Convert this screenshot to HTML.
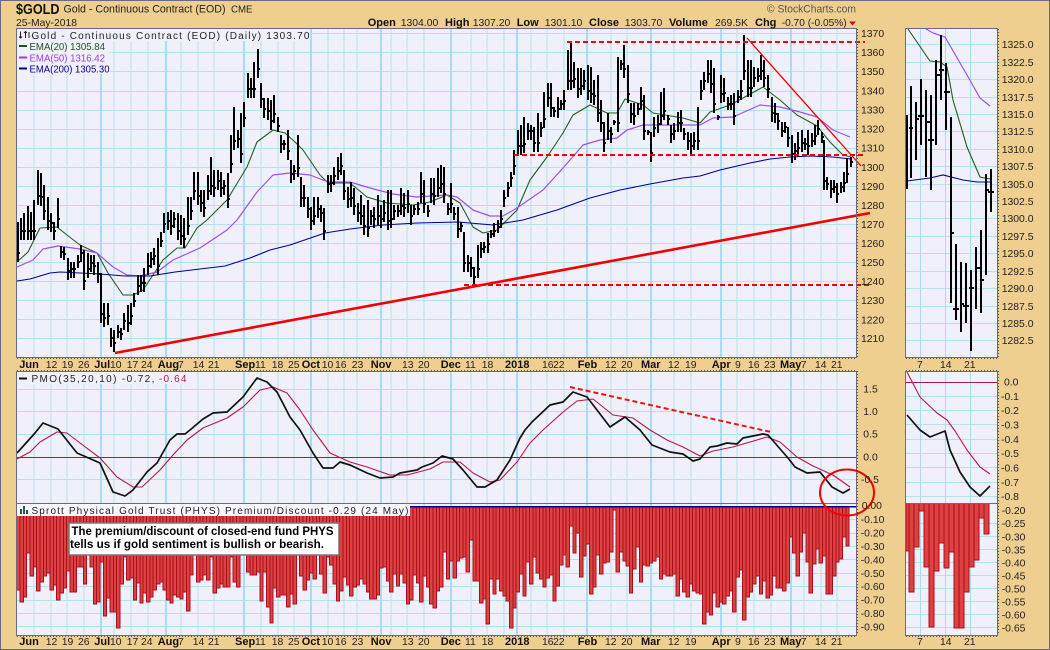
<!DOCTYPE html>
<html><head><meta charset="utf-8"><title>$GOLD</title>
<style>
html,body{margin:0;padding:0;background:#eecf90}
svg{display:block}
text{font-family:"Liberation Sans",Arial,sans-serif;fill:#222;font-size:10.4px}
.b{font-weight:bold;font-size:11px;fill:#111}
.l{letter-spacing:.6px;font-size:10px;fill:#222}
</style></head><body>
<svg xmlns="http://www.w3.org/2000/svg" width="1050" height="650" viewBox="0 0 1050 650">
<rect x="0" y="0" width="1050" height="650" fill="#eecf90"/>
<rect x=".5" y=".5" width="1049" height="649" fill="none" stroke="#6a6a86"/>
<!-- panels -->
<g fill="#f0f0fa">
<rect x="17" y="29" width="839" height="328"/><rect x="17" y="371" width="839" height="264"/>
<rect x="906" y="29" width="91" height="328"/><rect x="906" y="371" width="91" height="264"/>
</g>
<!-- grid -->
<g shape-rendering="crispEdges" fill="none">
<path stroke="#b4e2ea" d="M34 29V357M51 29V357M67 29V357M84 29V357M114 29V357M131 29V357M148 29V357M181 29V357M198 29V357M214 29V357M261 29V357M278 29V357M294 29V357M328 29V357M344 29V357M357 29V357M391 29V357M407 29V357M424 29V357M471 29V357M487 29V357M504 29V357M531 29V357M547 29V357M564 29V357M611 29V357M627 29V357M674 29V357M691 29V357M737 29V357M754 29V357M771 29V357M804 29V357M821 29V357M837 29V357M34 371V635M51 371V635M67 371V635M84 371V635M114 371V635M131 371V635M148 371V635M181 371V635M198 371V635M214 371V635M261 371V635M278 371V635M294 371V635M328 371V635M344 371V635M357 371V635M391 371V635M407 371V635M424 371V635M471 371V635M487 371V635M504 371V635M531 371V635M547 371V635M564 371V635M611 371V635M627 371V635M674 371V635M691 371V635M737 371V635M754 371V635M771 371V635M804 371V635M821 371V635M837 371V635M17 33.5H856M17 52.5H856M17 71.5H856M17 91.5H856M17 110.5H856M17 129.5H856M17 148.5H856M17 167.5H856M17 186.5H856M17 205.5H856M17 224.5H856M17 243.5H856M17 262.5H856M17 281.5H856M17 300.5H856M17 319.5H856M17 338.5H856M17 389.5H856M17 411.5H856M17 434.5H856M17 479.5H856M17 519.5H856M17 533.5H856M17 546.5H856M17 559.5H856M17 573.5H856M17 586.5H856M17 600.5H856M17 613.5H856M17 626.5H856M906 44.5H997M906 62.5H997M906 79.5H997M906 97.5H997M906 114.5H997M906 131.5H997M906 149.5H997M906 166.5H997M906 184.5H997M906 201.5H997M906 218.5H997M906 236.5H997M906 253.5H997M906 271.5H997M906 288.5H997M906 306.5H997M906 323.5H997M906 340.5H997M906 396.5H997M906 410.5H997M906 424.5H997M906 439.5H997M906 453.5H997M906 467.5H997M906 482.5H997M906 496.5H997M906 523.5H997M906 536.5H997M906 549.5H997M906 562.5H997M906 575.5H997M906 588.5H997M906 601.5H997M906 614.5H997M906 627.5H997"/>
<path stroke="#a8dcf2" stroke-width="2" d="M101 29V357M166 29V357M244 29V357M311 29V357M381 29V357M451 29V357M517 29V357M587 29V357M651 29V357M721 29V357M791 29V357M101 371V635M166 371V635M244 371V635M311 371V635M381 371V635M451 371V635M517 371V635M587 371V635M651 371V635M721 371V635M791 371V635"/>
<path stroke="#a8dcee" d="M920.5 29V357M945.5 29V357M970.5 29V357M920.5 371V635M945.5 371V635M970.5 371V635"/>
</g>
<!-- legends backdrop -->
<rect x="17" y="29" width="293" height="12" fill="#f0f0fa"/><rect x="17" y="41" width="93" height="33" fill="#f0f0fa"/>
<!-- EMA main -->
<g fill="none" stroke-linejoin="round">
<path stroke="#1f5f1f" stroke-width="1.1" d="M17 262L28 252L40 228L57 227L67 235L80 245L97 253L108 273L123 295L133 295L143 290L163 260L177 248L185 248L197 228L207 220L227 200L247 167L257 142L273 130L285 133L295 142L303 150L320 175L328 183L350 183L367 197L387 203L413 205L430 202L447 195L460 203L473 227L483 233L497 230L517 210L530 180L547 157L563 133L573 115L590 105L607 113L617 113L625 99L643 105L653 113L683 118L700 123L710 112L730 105L743 98L763 87L780 100L797 115L817 126L830 142L843 155L851 157"/>
<path stroke="#a04fe6" stroke-width="1.2" d="M17 267L33 260L43 249L58 246L80 249L97 253L113 267L127 275L140 276L157 272L173 260L200 248L227 230L237 220L257 192L273 175L290 173L310 175L328 182L350 182L370 188L393 194L417 197L447 195L457 197L473 210L490 216L503 216L517 208L543 190L563 168L583 145L600 140L617 138L627 130L643 125L667 125L700 125L713 118L733 117L760 105L780 107L800 112L817 117L833 130L850 137"/>
<path stroke="#000090" stroke-width="1.1" d="M17 281L30 279L50 273L60 272L80 273L100 274L125 276L150 276L175 272L200 269L225 266L250 258L270 250L290 245L325 233L350 229L383 225L417 223L458 222L493 225L523 220L557 210L590 198L620 190L650 184L683 178L700 176L720 170L750 163L770 159L790 157L810 156L833 157L851 159"/>
</g>
<!-- OHLC main -->
<path fill="none" stroke="#000" stroke-width="2" shape-rendering="crispEdges" d="M18 222V262m0-9h2M21 218V240m0-9h2M24 213V240m0-9h2M28 206V240m0-9h2M31 212V240m0-9h2M34 200V240m0-9h2M38 170V205m0-9h2M41 173V206m0-9h2M44 185V220m0-9h2M48 197V230m0-9h2M51 213V232m0-9h2M54 222V240m0-9h2M58 198V228m0-9h2M61 246V258m0-6h2M64 247V260m0-6h2M68 258V280m0-9h2M71 262V278m0-9h2M74 262V278m0-9h2M78 255V268m0-6h2M81 245V262m0-9h2M84 250V290m0-9h2M88 253V278m0-9h2M91 255V272m0-9h2M94 255V275m0-9h2M98 262V283m0-9h2M101 273V323m0-9h2M104 303V327m0-9h2M108 303V325m0-9h2M111 328V347m0-9h2M114 330V352m0-9h2M118 325V338m0-6h2M121 328V340m0-6h2M124 313V330m0-9h2M128 305V332m0-9h2M131 303V325m0-9h2M134 293V307m0-6h2M138 275V295m0-9h2M141 275V292m0-9h2M144 268V292m0-9h2M148 253V275m0-9h2M151 252V268m0-9h2M154 248V265m0-9h2M158 238V275m0-9h2M161 232V247m0-6h2M164 213V233m0-9h2M168 212V230m0-9h2M171 210V235m0-9h2M174 212V228m0-9h2M178 213V240m0-9h2M181 215V245m0-9h2M184 218V248m0-9h2M188 197V235m0-9h2M191 197V220m0-9h2M194 172V200m0-9h2M198 172V205m0-9h2M201 190V212m0-9h2M204 190V217m0-9h2M208 175V200m0-9h2M211 157V195m0-9h2M214 170V197m0-9h2M218 170V190m0-9h2M221 172V197m0-9h2M224 180V195m0-9h2M228 173V208m0-9h2M231 135V173m0-9h2M234 107V150m0-9h2M238 130V148m0-9h2M241 113V163m0-9h2M244 102V127m0-9h2M248 73V98m0-9h2M251 78V98m0-9h2M254 62V98m0-9h2M258 49V78m0-9h2M261 83V108m0-9h2M264 98V118m0-9h2M268 98V120m0-9h2M271 100V130m0-9h2M274 95V123m0-9h2M278 117V132m0-6h2M281 135V153m0-9h2M284 140V150m0-6h2M288 130V160m0-9h2M291 160V183m0-9h2M294 165V180m0-9h2M298 135V177m0-9h2M301 177V207m0-9h2M304 185V207m0-9h2M308 197V218m0-9h2M311 207V230m0-9h2M314 197V225m0-9h2M318 197V218m0-9h2M321 205V222m0-9h2M324 208V240m0-9h2M328 175V193m0-9h2M331 175V192m0-9h2M334 167V185m0-9h2M338 157V180m0-9h2M341 153V175m0-9h2M344 170V200m0-9h2M348 187V208m0-9h2M351 182V207m0-9h2M354 188V215m0-9h2M358 203V222m0-9h2M361 195V225m0-9h2M364 205V235m0-9h2M368 200V237m0-9h2M371 210V225m0-9h2M374 207V228m0-9h2M378 195V225m0-9h2M381 205V228m0-9h2M384 200V222m0-9h2M388 190V230m0-9h2M391 190V228m0-9h2M394 205V220m0-9h2M398 205V217m0-6h2M401 188V215m0-9h2M404 193V217m0-9h2M408 190V213m0-9h2M411 205V225m0-9h2M414 205V215m0-6h2M418 202V215m0-6h2M421 172V203m0-9h2M424 180V213m0-9h2M428 205V217m0-6h2M431 178V203m0-9h2M434 178V205m0-9h2M438 168V197m0-9h2M441 165V193m0-9h2M444 167V203m0-9h2M448 203V215m0-6h2M451 183V213m0-9h2M454 207V220m0-6h2M458 207V238m0-9h2M461 222V232m0-6h2M464 232V272m0-9h2M468 255V272m0-9h2M471 257V277m0-9h2M474 267V286m0-9h2M478 245V278m0-9h2M481 242V258m0-9h2M484 242V253m0-6h2M488 233V253m0-9h2M491 230V238m0-4h2M494 223V237m0-6h2M498 220V233m0-6h2M501 210V228m0-9h2M504 190V207m0-9h2M508 182V197m0-9h2M511 172V187m0-9h2M514 150V175m0-9h2M518 130V155m0-9h2M521 125V155m0-9h2M524 117V153m0-9h2M528 123V140m0-9h2M531 125V140m0-9h2M534 127V152m0-9h2M538 113V152m0-9h2M541 122V137m0-9h2M544 92V128m0-9h2M548 83V107m0-9h2M551 83V117m0-9h2M554 107V117m0-6h2M558 97V118m0-9h2M561 100V110m0-6h2M564 90V110m0-9h2M568 50V90m0-9h2M571 43V90m0-9h2M574 62V88m0-9h2M578 68V98m0-9h2M581 68V95m0-9h2M584 70V90m0-9h2M588 65V100m0-9h2M591 67V103m0-9h2M594 80V105m0-9h2M598 75V122m0-9h2M601 100V132m0-9h2M604 122V152m0-9h2M608 113V140m0-9h2M611 127V143m0-9h2M614 120V125m0-3h2M618 57V132m0-9h2M621 60V70m0-6h2M624 45V78m0-9h2M628 65V103m0-9h2M631 103V123m0-9h2M634 103V125m0-9h2M638 103V115m0-6h2M641 87V110m0-9h2M644 95V140m0-9h2M648 130V135m0-3h2M651 132V162m0-9h2M654 117V137m0-9h2M658 115V133m0-9h2M661 92V125m0-9h2M664 88V120m0-9h2M668 115V125m0-6h2M671 125V143m0-9h2M674 123V140m0-9h2M678 112V132m0-9h2M681 110V132m0-9h2M684 128V140m0-6h2M688 132V150m0-9h2M691 133V155m0-9h2M694 132V150m0-9h2M698 107V150m0-9h2M701 80V100m0-9h2M704 72V90m0-9h2M708 60V83m0-9h2M711 60V93m0-9h2M714 68V113m0-9h2M718 115V120m0-3h2M721 75V103m0-9h2M724 78V102m0-9h2M728 97V110m0-6h2M731 95V110m0-6h2M734 93V125m0-9h2M738 90V103m0-6h2M741 80V100m0-9h2M744 35V80m0-9h2M748 60V97m0-9h2M751 60V97m0-9h2M754 67V87m0-9h2M758 68V82m0-6h2M761 55V80m0-9h2M764 60V87m0-9h2M768 75V98m0-9h2M772 97V122m0-9h2M775 103V123m0-9h2M778 113V130m0-9h2M782 122V137m0-6h2M785 122V133m0-6h2M788 127V147m0-9h2M792 135V163m0-9h2M795 143V160m0-9h2M798 132V157m0-9h2M802 130V152m0-9h2M805 138V150m0-6h2M808 130V155m0-9h2M812 133V147m0-6h2M815 125V145m0-9h2M818 120V135m0-6h2M822 132V143m0-6h2M824 140V190m0-9h2M827 177V190m0-6h2M831 180V198m0-9h2M834 180V193m0-6h2M837 183V203m0-9h2M841 182V193m0-6h2M844 172V192m0-9h2M847 158V183m0-9h2M851 157V167m0-5h2"/>
<!-- red annotations main -->
<g fill="none" stroke="#f00000">
<path stroke-width="2" stroke-dasharray="5 3" d="M567 42H865M514 155H866M464 285H870"/>
<path stroke-width="2.6" d="M115 353L870 213"/>
<path stroke-width="1.3" d="M747 38L861 166"/>
</g>
<!-- Right main -->
<g fill="none">
<path stroke="#1f5f1f" stroke-width="1.1" d="M908 29L930 61L940 62L947 67L953 100L967 147L980 177L990 179"/>
<path stroke="#a04fe6" stroke-width="1.2" d="M926 29L933 33L945 37L967 75L980 98L990 106"/>
<path stroke="#000090" stroke-width="1.1" d="M907 181L930 178L943 175L963 180L977 182L990 182"/>
<path stroke="#000" stroke-width="2" shape-rendering="crispEdges" d="M907 115V189M911 86V178m-2-50h4M916 102V160m0-41h3M921 79V145m-3-29h6M926 90V177m0-55h4M931 95V190m-3-50h6M936 60V145m0-70h4M941 35V100m-2-30h5M946 63V130m-2-38h6M951 117V303m0-70h3M956 244V320m-3-11h6M961 262V332m0-28h3M966 263V323m-3-17h6M971 270V351m-2-63h5M976 247V309m0-41h4M981 230V313m0-33h3M986 174V275m0-85h3M991 169V212m-3-20h6"/>
</g>
<!-- PMO -->
<g fill="none" stroke-linejoin="round">
<path stroke="#a81a3c" stroke-width="1.1" shape-rendering="crispEdges" d="M17 457.5H856M906 382.5H997"/>
<path stroke="#b8164a" stroke-width="1.1" d="M17 459L30 452L40 442L57 432L67 433L80 443L100 458L117 477L133 487L142 487L160 470L173 455L187 440L203 428L227 418L243 407L260 390L273 387L287 393L300 410L313 430L330 453L350 462L367 467L390 475L407 475L430 469L443 462L460 462L473 473L490 482L500 480L517 462L530 443L543 430L563 412L577 401L593 399L613 415L633 418L650 430L667 440L683 447L700 456L713 451L733 447L767 437L780 442L797 457L813 466L833 475L850 487"/>
<path stroke="#111" stroke-width="1.7" d="M17 453L35 433L43 423L58 429L77 453L100 463L113 492L125 496L133 490L147 472L157 463L170 440L177 434L185 434L190 430L203 419L213 413L227 412L243 397L257 378L267 382L277 392L290 417L300 430L313 453L323 468L333 468L340 462L350 465L367 473L380 478L393 477L400 473L417 470L422 467L433 463L442 456L453 459L463 470L477 487L485 487L497 480L510 460L520 438L525 430L532 422L550 405L563 402L573 392L587 397L597 410L610 427L625 417L640 430L652 445L670 452L683 454L693 461L700 459L710 447L717 446L727 443L737 444L743 438L763 434L768 435L788 458L795 467L807 473L820 472L832 487L843 493L850 489"/>
<path stroke="#f01010" stroke-width="2" stroke-dasharray="5 3" d="M570 387L771 432"/>
<path stroke="#b8164a" stroke-width="1.1" d="M907 372L920 397L937 413L947 420L955 431L967 450L980 467L990 474"/>
<path stroke="#111" stroke-width="1.7" d="M907 415L920 430L930 437L945 431L950 450L960 472L970 487L980 496L990 486"/>
</g>
<!-- PHYS panel separators -->
<path stroke="#6a6a80" stroke-width="1" d="M17 503.5H856M906 503.5H997" shape-rendering="crispEdges"/>
<path fill="#dd4141" stroke="#a80f1c" stroke-width="1" shape-rendering="crispEdges" d="M16.7 506V590h3.33V506V602h3.33V506V597h3.33V506V553h3.33V506V576h3.33V506V567h3.33V506V591h3.33V506V582h3.33V506V576h3.33V506V573h3.33V506V590h3.33V506V585h3.33V506V600h3.33V506V593h3.33V506V588h3.33V506V571h3.33V506V592h3.33V506V592h3.33V506V567h3.33V506V567h3.33V506V584h3.33V506V553h3.33V506V567h3.33V506V604h3.33V506V602h3.33V506V562h3.33V506V616h3.33V506V598h3.33V506V612h3.33V506V612h3.33V506V628h3.33V506V584h3.33V506V557h3.33V506V580h3.33V506V578h3.33V506V600h3.33V506V583h3.33V506V603h3.33V506V593h3.33V506V602h3.33V506V597h3.33V506V590h3.33V506V584h3.33V506V582h3.33V506V590h3.33V506V600h3.33V506V603h3.33V506V595h3.33V506V597h3.33V506V599h3.33V506V592h3.33V506V611h3.33V506V575h3.33V506V555h3.33V506V582h3.33V506V580h3.33V506V575h3.33V506V580h3.33V506V557h3.33V506V593h3.33V506V588h3.33V506V584h3.33V506V587h3.33V506V587h3.33V506V557h3.33V506V582h3.33V506V587h3.33V506V555h3.33V506V555h3.33V506V572h3.33V506V575h3.33V506V575h3.33V506V572h3.33V506V601h3.33V506V572h3.33V506V607h3.33V506V623h3.33V506V588h3.33V506V597h3.33V506V595h3.33V506V595h3.33V506V607h3.33V506V594h3.33V506V604h3.33V506V555h3.33V506V576h3.33V506V590h3.33V506V580h3.33V506V573h3.33V506V579h3.33V506V555h3.33V506V574h3.33V506V593h3.33V506V557h3.33V506V565h3.33V506V584h3.33V506V601h3.33V506V591h3.33V506V577h3.33V506V585h3.33V506
V596h3.33V506V587h3.33V506V585h3.33V506V579h3.33V506V584h3.33V506V592h3.33V506V599h3.33V506V599h3.33V506V595h3.33V506V568h3.33V506V567h3.33V506V581h3.33V506V592h3.33V506V574h3.33V506V586h3.33V506V574h3.33V506V583h3.33V506V604h3.33V506V600h3.33V506V575h3.33V506V583h3.33V506V602h3.33V506V576h3.33V506V587h3.33V506V604h3.33V506V608h3.33V506V591h3.33V506V587h3.33V506V552h3.33V506V579h3.33V506V561h3.33V506V578h3.33V506V561h3.33V506V558h3.33V506V557h3.33V506V572h3.33V506V540h3.33V506V581h3.33V506V581h3.33V506V603h3.33V506V599h3.33V506V624h3.33V506V579h3.33V506V594h3.33V506V579h3.33V506V591h3.33V506V596h3.33V506V601h3.33V506V628h3.33V506V608h3.33V506V592h3.33V506V574h3.33V506V596h3.33V506V562h3.33V506V584h3.33V506V557h3.33V506V573h3.33V506V579h3.33V506V587h3.33V506V578h3.33V506V575h3.33V506V601h3.33V506V586h3.33V506V565h3.33V506V555h3.33V506V567h3.33V506V526h3.33V506V553h3.33V506V533h3.33V506V577h3.33V506V556h3.33V506V544h3.33V506V594h3.33V506V587h3.33V506V555h3.33V506V574h3.33V506V563h3.33V506V562h3.33V506V552h3.33V506V510h3.33V506V572h3.33V506V552h3.33V506V561h3.33V506V566h3.33V506V593h3.33V506V569h3.33V506V547h3.33V506V582h3.33V506V565h3.33V506V566h3.33V506V563h3.33V506V561h3.33V506V557h3.33V506V579h3.33V506V574h3.33V506V576h3.33V506V576h3.33V506V574h3.33V506V596h3.33V506V579h3.33V506V592h3.33V506V597h3.33V506V584h3.33V506V591h3.33V506V593h3.33V506
V594h3.33V506V624h3.33V506V612h3.33V506V615h3.33V506V593h3.33V506V607h3.33V506V602h3.33V506V604h3.33V506V596h3.33V506V591h3.33V506V612h3.33V506V577h3.33V506V570h3.33V506V620h3.33V506V597h3.33V506V592h3.33V506V584h3.33V506V576h3.33V506V594h3.33V506V581h3.33V506V598h3.33V506V595h3.33V506V576h3.33V506V588h3.33V506V588h3.33V506V591h3.33V506V583h3.33V506V537h3.33V506V553h3.33V506V576h3.33V506V552h3.33V506V533h3.33V506V562h3.33V506V593h3.33V506V564h3.33V506V549h3.33V506V563h3.33V506V556h3.33V506V594h3.33V506V594h3.33V506V576h3.33V506V562h3.33V506V559h3.33V506V537h3.33V506V546h3.33V506"/>
<path stroke="#00008c" stroke-width="1.5" d="M17 506.5H856" shape-rendering="crispEdges"/>
<path fill="#dd4141" stroke="#a80f1c" stroke-width="1" shape-rendering="crispEdges" d="M906 504V551h3V504V592h5V504V547h5V504V511h5V504V567h5V504V627h5V504V571h5V504V543h5V504V568h5V504V552h5V504V628h5V504V628h5V504V592h5V504V567h5V504V560h5V504V518h5V504V534h5V504"/>
<!-- panel frames -->
<g fill="none" stroke="#6a6a86" shape-rendering="crispEdges">
<path d="M16.5 28.5H856.5V357.5H16.5ZM16.5 371.5H856.5V635.5H16.5ZM905.5 28.5H997.5V357.5H905.5ZM905.5 371.5H997.5V635.5H905.5Z"/>
</g>
<g fill="none" stroke="#555" stroke-dasharray="1 2" shape-rendering="crispEdges">
<path d="M857.5 29V357M857.5 371V635M998.5 29V357M998.5 371V635M17 358.5H856M906 358.5H997M17 636.5H856M906 636.5H997M17 370.5H856M906 370.5H997"/>
</g>
<!-- backdrop legends -->
<rect x="17" y="372" width="172" height="12" fill="#f0f0fa"/>
<rect x="17" y="504" width="393" height="12" fill="#f8f8fc"/>
<!-- Red circle -->
<ellipse cx="847" cy="492.5" rx="27" ry="23" fill="none" stroke="#f00000" stroke-width="2"/>
<!-- note box -->
<rect x="69" y="523" width="270" height="32" fill="#fff" stroke="#777" stroke-width="1.5"/>
<text x="71.5" y="535" textLength="262" lengthAdjust="spacingAndGlyphs" style="font-weight:bold;font-size:11.5px;fill:#000">The premium/discount of closed-end fund PHYS</text>
<text x="70" y="548" textLength="254" lengthAdjust="spacingAndGlyphs" style="font-weight:bold;font-size:11.5px;fill:#000">tells us if gold sentiment is bullish or bearish.</text>
<!-- headers -->
<text x="16" y="14" textLength="43.5" lengthAdjust="spacingAndGlyphs" style="font-weight:bold;font-size:14.5px;fill:#111">$GOLD</text>
<text x="63.5" y="12.5" textLength="162" lengthAdjust="spacingAndGlyphs" style="font-size:11px;fill:#222">Gold - Continuous Contract (EOD)</text>
<text x="231" y="12.5" textLength="21.5" lengthAdjust="spacingAndGlyphs" style="font-size:10px;fill:#222">CME</text>
<text x="16" y="26" textLength="61" lengthAdjust="spacingAndGlyphs" style="font-size:10.5px;fill:#222">25-May-2018</text>
<text x="767" y="12.5" textLength="89" lengthAdjust="spacingAndGlyphs" style="font-size:11px;fill:#555">© StockCharts.com</text>
<g>
<text class="b" x="367.7" y="26">Open</text><text x="400.7" y="26">1304.00</text>
<text class="b" x="445" y="26">High</text><text x="472.7" y="26">1307.20</text>
<text class="b" x="516.7" y="26">Low</text><text x="544.7" y="26">1301.10</text>
<text class="b" x="589" y="26">Close</text><text x="624.7" y="26">1303.70</text>
<text class="b" x="669" y="26">Volume</text><text x="715" y="26">269.5K</text>
<text class="b" x="755" y="26">Chg</text><text x="781.7" y="26" textLength="65" lengthAdjust="spacingAndGlyphs">-0.70 (-0.05%)</text>
</g>
<path d="M849 21.5H856L852.5 25.5Z" fill="#b01838"/>
<!-- chart legend -->
<path d="M20.5 31.5V38M19 36.5L20.5 38L22 36.5M25.5 31.5V38M24 33L25.5 31.5L27 33M29 32V38" fill="none" stroke="#222" stroke-width="1"/>
<text class="l" x="31.5" y="39" textLength="278.5" lengthAdjust="spacing">Gold - Continuous Contract (EOD) (Daily) 1303.70</text>
<path d="M19 46H27" stroke="#1f4f1f" stroke-width="2"/><text x="29.5" y="50" textLength="75.5" lengthAdjust="spacingAndGlyphs" style="fill:#1f4f1f;font-size:10.5px">EMA(20) 1305.84</text>
<path d="M19 57.5H27" stroke="#9a3ce6" stroke-width="2"/><text x="29.5" y="61.5" textLength="75.5" lengthAdjust="spacingAndGlyphs" style="fill:#9a3ce6;font-size:10.5px">EMA(50) 1316.42</text>
<path d="M19 68.5H27" stroke="#000090" stroke-width="2"/><text x="29.5" y="72.5" textLength="80" lengthAdjust="spacingAndGlyphs" style="fill:#000090;font-size:10.5px">EMA(200) 1305.30</text>
<path d="M19 378.5H27" stroke="#111" stroke-width="2"/>
<text class="l" x="31.5" y="382" textLength="123.5" lengthAdjust="spacing">PMO(35,20,10) -0.72,</text>
<text class="l" x="159" y="382" textLength="28" lengthAdjust="spacing" style="fill:#b8164a">-0.64</text>
<path d="M20 514V509H22V514ZM23 514V506H25V514ZM26 514V510H28V514Z" fill="#1f5f3f"/>
<text class="l" x="31.5" y="514" textLength="377.5" lengthAdjust="spacing">Sprott Physical Gold Trust (PHYS) Premium/Discount -0.29 (24 May)</text>
<!-- date axis top -->
<g>
<text class="b" x="19.3" y="368">Jun</text><text x="45.7" y="368">12</text><text x="61.7" y="368">19</text><text x="78" y="368">26</text><text class="b" x="94.3" y="368">Jul</text><text x="110" y="368">10</text><text x="126.7" y="368">17</text><text x="141" y="368">24</text><text class="b" x="157.7" y="368">Aug</text><text x="178" y="368">7</text><text x="192.7" y="368">14</text><text x="208" y="368">21</text><text class="b" x="235" y="368">Sep</text><text x="255" y="368">11</text><text x="271.7" y="368">18</text><text x="288" y="368">25</text><text class="b" x="301.7" y="368">Oct</text><text x="321.7" y="368">10</text><text x="335" y="368">16</text><text x="351.7" y="368">23</text><text class="b" x="370.7" y="368">Nov</text><text x="402" y="368">13</text><text x="418" y="368">20</text><text class="b" x="440.7" y="368">Dec</text><text x="465" y="368">11</text><text x="481.7" y="368">18</text><text class="b" x="505" y="368">2018</text><text x="542" y="368">16</text><text x="553" y="368">22</text><text class="b" x="577.7" y="368">Feb</text><text x="605" y="368">12</text><text x="621" y="368">20</text><text class="b" x="641" y="368">Mar</text><text x="668" y="368">12</text><text x="685" y="368">19</text><text class="b" x="711.7" y="368">Apr</text><text x="735" y="368">9</text><text x="748" y="368">16</text><text x="764" y="368">23</text><text class="b" x="780" y="368">May</text><text x="800.7" y="368">7</text><text x="815" y="368">14</text><text x="831" y="368">21</text><text x="917" y="368">7</text><text x="940" y="368">14</text><text x="964" y="368">21</text>
</g>
<!-- date axis bottom -->
<g>
<text class="b" x="19.3" y="645">Jun</text><text x="45.7" y="645">12</text><text x="61.7" y="645">19</text><text x="78" y="645">26</text><text class="b" x="94.3" y="645">Jul</text><text x="110" y="645">10</text><text x="126.7" y="645">17</text><text x="141" y="645">24</text><text class="b" x="157.7" y="645">Aug</text><text x="178" y="645">7</text><text x="192.7" y="645">14</text><text x="208" y="645">21</text><text class="b" x="235" y="645">Sep</text><text x="255" y="645">11</text><text x="271.7" y="645">18</text><text x="288" y="645">25</text><text class="b" x="301.7" y="645">Oct</text><text x="321.7" y="645">10</text><text x="335" y="645">16</text><text x="351.7" y="645">23</text><text class="b" x="370.7" y="645">Nov</text><text x="402" y="645">13</text><text x="418" y="645">20</text><text class="b" x="440.7" y="645">Dec</text><text x="465" y="645">11</text><text x="481.7" y="645">18</text><text class="b" x="505" y="645">2018</text><text x="542" y="645">16</text><text x="553" y="645">22</text><text class="b" x="577.7" y="645">Feb</text><text x="605" y="645">12</text><text x="621" y="645">20</text><text class="b" x="641" y="645">Mar</text><text x="668" y="645">12</text><text x="685" y="645">19</text><text class="b" x="711.7" y="645">Apr</text><text x="735" y="645">9</text><text x="748" y="645">16</text><text x="764" y="645">23</text><text class="b" x="780" y="645">May</text><text x="800.7" y="645">7</text><text x="815" y="645">14</text><text x="831" y="645">21</text><text x="917" y="645">7</text><text x="940" y="645">14</text><text x="964" y="645">21</text>
</g>
<!-- price axis main -->
<g style="font-size:10px">
<text x="861" y="37">1370</text><text x="861" y="56">1360</text><text x="861" y="75">1350</text><text x="861" y="94.5">1340</text><text x="861" y="113.5">1330</text><text x="861" y="132.5">1320</text><text x="861" y="151.5">1310</text><text x="861" y="171">1300</text><text x="861" y="190">1290</text><text x="861" y="209">1280</text><text x="861" y="228">1270</text><text x="861" y="247">1260</text><text x="861" y="266">1250</text><text x="861" y="285">1240</text><text x="861" y="304">1230</text><text x="861" y="323.5">1220</text><text x="861" y="342">1210</text>
<text x="863.3" y="392.5">1.5</text><text x="863.3" y="415">1.0</text><text x="863.3" y="437.5">0.5</text><text x="863.3" y="460.5">0.0</text><text x="861" y="483">-0.5</text>
<text x="861.7" y="509">0.00</text><text x="860.7" y="523">-0.10</text><text x="860.7" y="536.5">-0.20</text><text x="860.7" y="550">-0.30</text><text x="860.7" y="563.5">-0.40</text><text x="860.7" y="577">-0.50</text><text x="860.7" y="590">-0.60</text><text x="860.7" y="603.5">-0.70</text><text x="860.7" y="617">-0.80</text><text x="860.7" y="630.5">-0.90</text>
</g>
<!-- right axis -->
<g>
<text x="1001.7" y="48">1325.0</text><text x="1001.7" y="66">1322.5</text><text x="1001.7" y="83">1320.0</text><text x="1001.7" y="101">1317.5</text><text x="1001.7" y="118">1315.0</text><text x="1001.7" y="135">1312.5</text><text x="1001.7" y="153">1310.0</text><text x="1001.7" y="170">1307.5</text><text x="1001.7" y="188">1305.0</text><text x="1001.7" y="205">1302.5</text><text x="1001.7" y="222">1300.0</text><text x="1001.7" y="240">1297.5</text><text x="1001.7" y="257">1295.0</text><text x="1001.7" y="275">1292.5</text><text x="1001.7" y="292">1290.0</text><text x="1001.7" y="310">1287.5</text><text x="1001.7" y="327">1285.0</text><text x="1001.7" y="344">1282.5</text>
<text x="1004" y="385.5">0.0</text><text x="1001" y="400">-0.1</text><text x="1001" y="414">-0.2</text><text x="1001" y="428.5">-0.3</text><text x="1001" y="443">-0.4</text><text x="1001" y="457">-0.5</text><text x="1001" y="471.5">-0.6</text><text x="1001" y="486">-0.7</text><text x="1001" y="500">-0.8</text>
<text x="1001.7" y="514">-0.20</text><text x="1001.7" y="527">-0.25</text><text x="1001.7" y="540.5">-0.30</text><text x="1001.7" y="553.5">-0.35</text><text x="1001.7" y="566.5">-0.40</text><text x="1001.7" y="579.5">-0.45</text><text x="1001.7" y="592.5">-0.50</text><text x="1001.7" y="605.5">-0.55</text><text x="1001.7" y="618.5">-0.60</text><text x="1001.7" y="631.5">-0.65</text>
</g>
</svg>
</body></html>
